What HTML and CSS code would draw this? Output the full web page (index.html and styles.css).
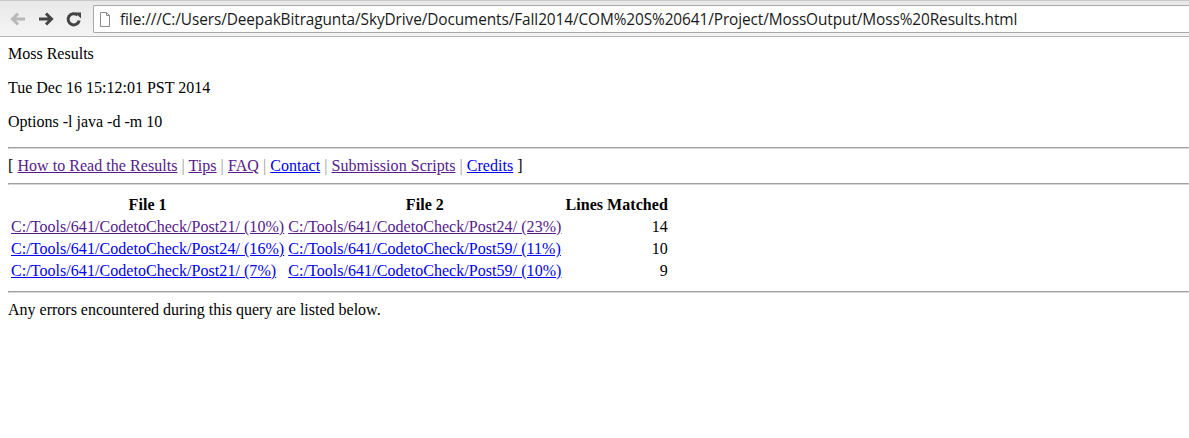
FILE: index.html
```html
<!DOCTYPE html>
<html>
<head>
<meta charset="utf-8">
<title>Moss Results</title>
<link rel="stylesheet" href="styles.css">
</head>
<body>
<div class="toolbar">
  <div class="nav-btn disabled">
    <svg width="18" height="16" viewBox="0 0 18 16"><path d="M16 8H4M9 2.5L3.5 8L9 13.5" fill="none" stroke="currentColor" stroke-width="3"/></svg>
  </div>
  <div class="nav-btn">
    <svg width="18" height="16" viewBox="0 0 18 16"><path d="M2 8H14M9 2.5L14.5 8L9 13.5" fill="none" stroke="currentColor" stroke-width="3"/></svg>
  </div>
  <div class="nav-btn">
    <svg width="18" height="18" viewBox="0 0 18 18"><path d="M14.2 10.5A5.6 5.6 0 1 1 12.6 5.2" fill="none" stroke="currentColor" stroke-width="3"/><path d="M10 2.5L16 2.5L16 8.5Z" fill="currentColor"/></svg>
  </div>
  <div class="omnibox">
    <svg class="page-icon" width="12" height="15" viewBox="0 0 12 15"><path d="M1.5 0.5H7.5L10.5 3.5V14.5H1.5Z" fill="#fff" stroke="#8a8a8a"/><path d="M7.5 0.5V3.5H10.5" fill="none" stroke="#8a8a8a"/></svg>
    <span class="url">file:///C:/Users/DeepakBitragunta/SkyDrive/Documents/Fall2014/COM%20S%20641/Project/MossOutput/Moss%20Results.html</span>
  </div>
</div>
<div class="page">
  <p>Moss Results</p>
  <p>Tue Dec 16 15:12:01 PST 2014</p>
  <p>Options -l java -d -m 10</p>
  <hr>
  <div class="links">[ <a class="visited" href="#">How to Read the Results</a> <span class="sep">|</span> <a class="visited" href="#">Tips</a> <span class="sep">|</span> <a class="visited" href="#">FAQ</a> <span class="sep">|</span> <a href="#">Contact</a> <span class="sep">|</span> <a class="visited" href="#">Submission Scripts</a> <span class="sep">|</span> <a href="#">Credits</a> ]</div>
  <hr>
  <table class="results">
    <tr><th>File 1</th><th>File 2</th><th>Lines Matched</th></tr>
    <tr><td><a class="visited" href="#">C:/Tools/641/CodetoCheck/Post21/ (10%)</a></td><td><a class="visited" href="#">C:/Tools/641/CodetoCheck/Post24/ (23%)</a></td><td class="num">14</td></tr>
    <tr><td><a href="#">C:/Tools/641/CodetoCheck/Post24/ (16%)</a></td><td><a href="#">C:/Tools/641/CodetoCheck/Post59/ (11%)</a></td><td class="num">10</td></tr>
    <tr><td><a href="#">C:/Tools/641/CodetoCheck/Post21/ (7%)</a></td><td><a href="#">C:/Tools/641/CodetoCheck/Post59/ (10%)</a></td><td class="num">9</td></tr>
  </table>
  <hr>
  <p>Any errors encountered during this query are listed below.</p>
</div>
</body>
</html>
```

FILE: styles.css
```css
html, body {
  margin: 0;
  padding: 0;
  background: #fff;
}
body {
  font-family: "Liberation Serif", "Times New Roman", serif;
  font-size: 16px;
  color: #000;
}
.toolbar {
  display: flex;
  align-items: center;
  background: linear-gradient(#e9e9e9, #f4f4f4);
  border-top: 1px solid #c8c8c8;
  border-bottom: 1px solid #b4b4b4;
  box-sizing: border-box;
  height: 37px;
  padding-left: 9px;
}
.nav-btn {
  width: 28px;
  display: flex;
  align-items: center;
  justify-content: flex-start;
  color: #444;
}
.nav-btn.disabled {
  color: #b8b8b8;
}
.omnibox {
  flex: 1;
  height: 28px;
  margin-top: 1px;
  display: flex;
  align-items: center;
  background: #fff;
  border: 1px solid #a9a9a9;
  border-right: none;
  border-radius: 2px 0 0 2px;
  box-sizing: border-box;
  padding-left: 5px;
}
.page-icon {
  margin-right: 9px;
}
.url {
  font-family: "Open Sans", "Noto Sans", sans-serif;
  font-size: 15.4px;
  color: #1a1a1a;
  white-space: nowrap;
  letter-spacing: -0.1px;
}
.page {
  padding: 8px;
}
.page p {
  margin: 0 0 16px 0;
}
hr {
  margin: 8px -8px 8px 0;
  border-style: solid;
  border-width: 1px;
  border-color: #a0a0a0 #d8d8d8 #d8d8d8 #a0a0a0;
  height: 0;
}
.links {
  letter-spacing: 0.04px;
}
a {
  color: #0000ee;
}
a.visited {
  color: #551a8b;
}
.sep {
  color: #999;
}
.results {
  border-spacing: 2px;
  border-collapse: separate;
  letter-spacing: 0.05px;
}
.results th, .results td {
  padding: 1px;
}
.results th {
  font-weight: bold;
  text-align: center;
}
.results td.num {
  text-align: right;
}
```
